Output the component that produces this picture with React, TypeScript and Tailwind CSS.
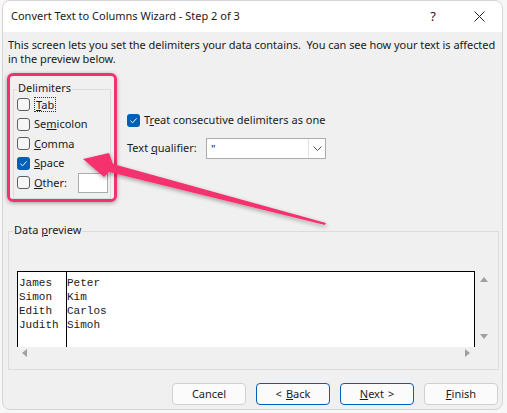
import React from 'react';

const ui = { fontFamily: '"Noto Sans", "Open Sans", sans-serif' };
const mono = { fontFamily: '"Liberation Mono", "Courier New", monospace' };

const Check: React.FC<{ on?: boolean }> = ({ on }) =>
  on ? (
    <span className="flex h-[13px] w-[13px] shrink-0 items-center justify-center rounded-[3px] bg-[#005fb8]">
      <svg width="9" height="9" viewBox="0 0 9 9">
        <path d="M1.5 4.8 L3.6 6.8 L7.6 2.4" fill="none" stroke="#fff" strokeWidth="1" />
      </svg>
    </span>
  ) : (
    <span className="h-[13px] w-[13px] shrink-0 rounded-[3px] border border-[#5f5f5f] bg-[#f6f6f6]" />
  );

const Row: React.FC<{ on?: boolean; children: React.ReactNode }> = ({ on, children }) => (
  <div className="flex h-[19.5px] items-center gap-[4px]">
    <Check on={on} />
    {children}
  </div>
);

const Btn: React.FC<{ primary?: boolean; children: React.ReactNode }> = ({ primary, children }) => (
  <button
    type="button"
    className={
      primary
        ? 'flex h-[22px] w-[74px] items-center justify-center rounded-[4px] border border-[#005fb8] bg-[#fbfbfb] text-[11px] text-[#1b1b1b]'
        : 'flex h-[22px] w-[74px] items-center justify-center rounded-[4px] border border-[#d0d0d0] bg-[#fbfbfb] text-[11px] text-[#1b1b1b]'
    }
  >
    {children}
  </button>
);

export default function App() {
  return (
    <div className="h-[413px] w-[507px] overflow-hidden bg-[#f7f7f7] pl-[2px]" style={ui}>
      <div className="relative flex h-[410px] w-[501px] flex-col overflow-hidden rounded-[8px] border border-[#d4d4d4] bg-[#f0f0f0] text-[#1a1a1a]">
        {/* title bar */}
        <div className="flex h-[31px] shrink-0 items-center bg-white pl-[8px] text-[11px]">
          <span className="flex-1">Convert Text to Columns Wizard - Step 2 of 3</span>
          <span className="w-[46px] text-center text-[13px]">?</span>
          <span className="flex w-[46px] justify-center">
            <svg width="11" height="11" viewBox="0 0 11 11">
              <path d="M0.5 0.5 L10.5 10.5 M10.5 0.5 L0.5 10.5" stroke="#222" strokeWidth="1" />
            </svg>
          </span>
        </div>

        <p className="mt-[6px] pl-[5px] text-[11px] leading-[14px] tracking-[-0.05px] whitespace-nowrap">
          This screen lets you set the delimiters your data contains.&nbsp; You can see how your text is affected
          <br />
          in the preview below.
        </p>

        <div className="mt-[13px] flex">
          {/* delimiters group */}
          <div className="relative ml-[10px] mt-[10px] h-[110px] w-[98px] border border-[#dcdcdc]">
            <span className="absolute left-[3px] top-[-9px] bg-[#f0f0f0] px-[1px] text-[11px] leading-[14px]">Delimiters</span>
            <div className="ml-[3px] mt-[5px] flex flex-col text-[11px]">
              <Row>
                <span className="border border-dotted border-[#333] px-[1px] leading-[13px]">
                  <u>T</u>ab
                </span>
              </Row>
              <Row>
                <span>
                  Se<u>m</u>icolon
                </span>
              </Row>
              <Row>
                <span>
                  <u>C</u>omma
                </span>
              </Row>
              <Row on>
                <span>
                  <u>S</u>pace
                </span>
              </Row>
              <Row>
                <span>
                  <u>O</u>ther:
                </span>
                <span className="ml-[7px] h-[20px] w-[30px] border border-[#acacac] bg-white" />
              </Row>
            </div>
          </div>

          {/* options */}
          <div className="ml-[16px] mt-[33px] flex flex-col text-[11px]">
            <div className="flex items-center gap-[4px]">
              <Check on />
              <span>
                T<u>r</u>eat consecutive delimiters as one
              </span>
            </div>
            <div className="mt-[9px] flex items-center">
              <span className="w-[79px]">
                Text <u>q</u>ualifier:
              </span>
              <div className="flex h-[21px] w-[120px] items-center border border-[#acacac] bg-white">
                <span className="flex-1 pl-[4px] text-[11px] leading-[11px]">"</span>
                <span className="flex h-full w-[17px] items-center justify-center border-l border-[#e3e3e3]">
                  <svg width="9" height="5" viewBox="0 0 9 5">
                    <path d="M0.5 0.5 L4.5 4.5 L8.5 0.5" fill="none" stroke="#555" strokeWidth="1" />
                  </svg>
                </span>
              </div>
            </div>
          </div>
        </div>

        {/* data preview group */}
        <div className="relative ml-[5px] mt-[32px] h-[139px] w-[491px] border border-[#dcdcdc]">
          <span className="absolute left-[4px] top-[-9px] bg-[#f0f0f0] px-[1px] text-[11px] leading-[14px]">
            Data <u>p</u>review
          </span>
          <div className="ml-[8px] mt-[39px] flex">
            <div className="flex flex-col">
              <div className="flex h-[76px] w-[458px] border-x border-t border-black bg-white text-[11px] leading-[14px]" style={mono}>
                <div className="w-[49px] border-r border-black pl-[1px] pt-[4px]">
                  <div>James</div>
                  <div>Simon</div>
                  <div>Edith</div>
                  <div>Judith</div>
                </div>
                <div className="pt-[4px]">
                  <div>Peter</div>
                  <div>Kim</div>
                  <div>Carlos</div>
                  <div>Simoh</div>
                </div>
              </div>
              <div className="flex h-[12px] items-center justify-between px-[5px]">
                <svg width="5" height="8" viewBox="0 0 5 8">
                  <path d="M5 0 L0 4 L5 8 Z" fill="#a0a0a0" />
                </svg>
                <svg width="5" height="8" viewBox="0 0 5 8">
                  <path d="M0 0 L5 4 L0 8 Z" fill="#a0a0a0" />
                </svg>
              </div>
            </div>
            <div className="flex w-[17px] flex-col items-center justify-between pt-[6px] pb-[20px]">
              <svg width="8" height="5" viewBox="0 0 8 5">
                <path d="M0 5 L4 0 L8 5 Z" fill="#a0a0a0" />
              </svg>
              <svg width="8" height="5" viewBox="0 0 8 5">
                <path d="M0 0 L4 5 L8 0 Z" fill="#a0a0a0" />
              </svg>
            </div>
          </div>
        </div>

        {/* buttons */}
        <div className="mt-[13px] flex justify-end gap-[10px] pr-[4px]">
          <Btn>Cancel</Btn>
          <Btn primary>
            <span>&lt;</span>
            <span className="ml-[4px]">
              <u>B</u>ack
            </span>
          </Btn>
          <Btn primary>
            <span>
              <u>N</u>ext
            </span>
            <span className="ml-[4px]">&gt;</span>
          </Btn>
          <Btn>
            <u>F</u>inish
          </Btn>
        </div>

        {/* pink annotation overlay */}
        <div className="pointer-events-none absolute left-[4px] top-[72px] h-[129px] w-[110px] rounded-[6px] border-[3px] border-[#f5306e] shadow-[0_1px_4px_rgba(0,0,0,0.35)]" />
        <svg className="pointer-events-none absolute left-0 top-0" width="501" height="410" viewBox="0 0 501 410">
          <defs>
            <filter id="sh" x="-20%" y="-20%" width="140%" height="140%">
              <feDropShadow dx="1" dy="2" stdDeviation="2" floodColor="#000" floodOpacity="0.35" />
            </filter>
          </defs>
          <polygon
            points="80,158 106,152 110,163 323,222 322,224 106,171 101,176"
            fill="#f5306e"
            filter="url(#sh)"
          />
        </svg>
      </div>
    </div>
  );
}
